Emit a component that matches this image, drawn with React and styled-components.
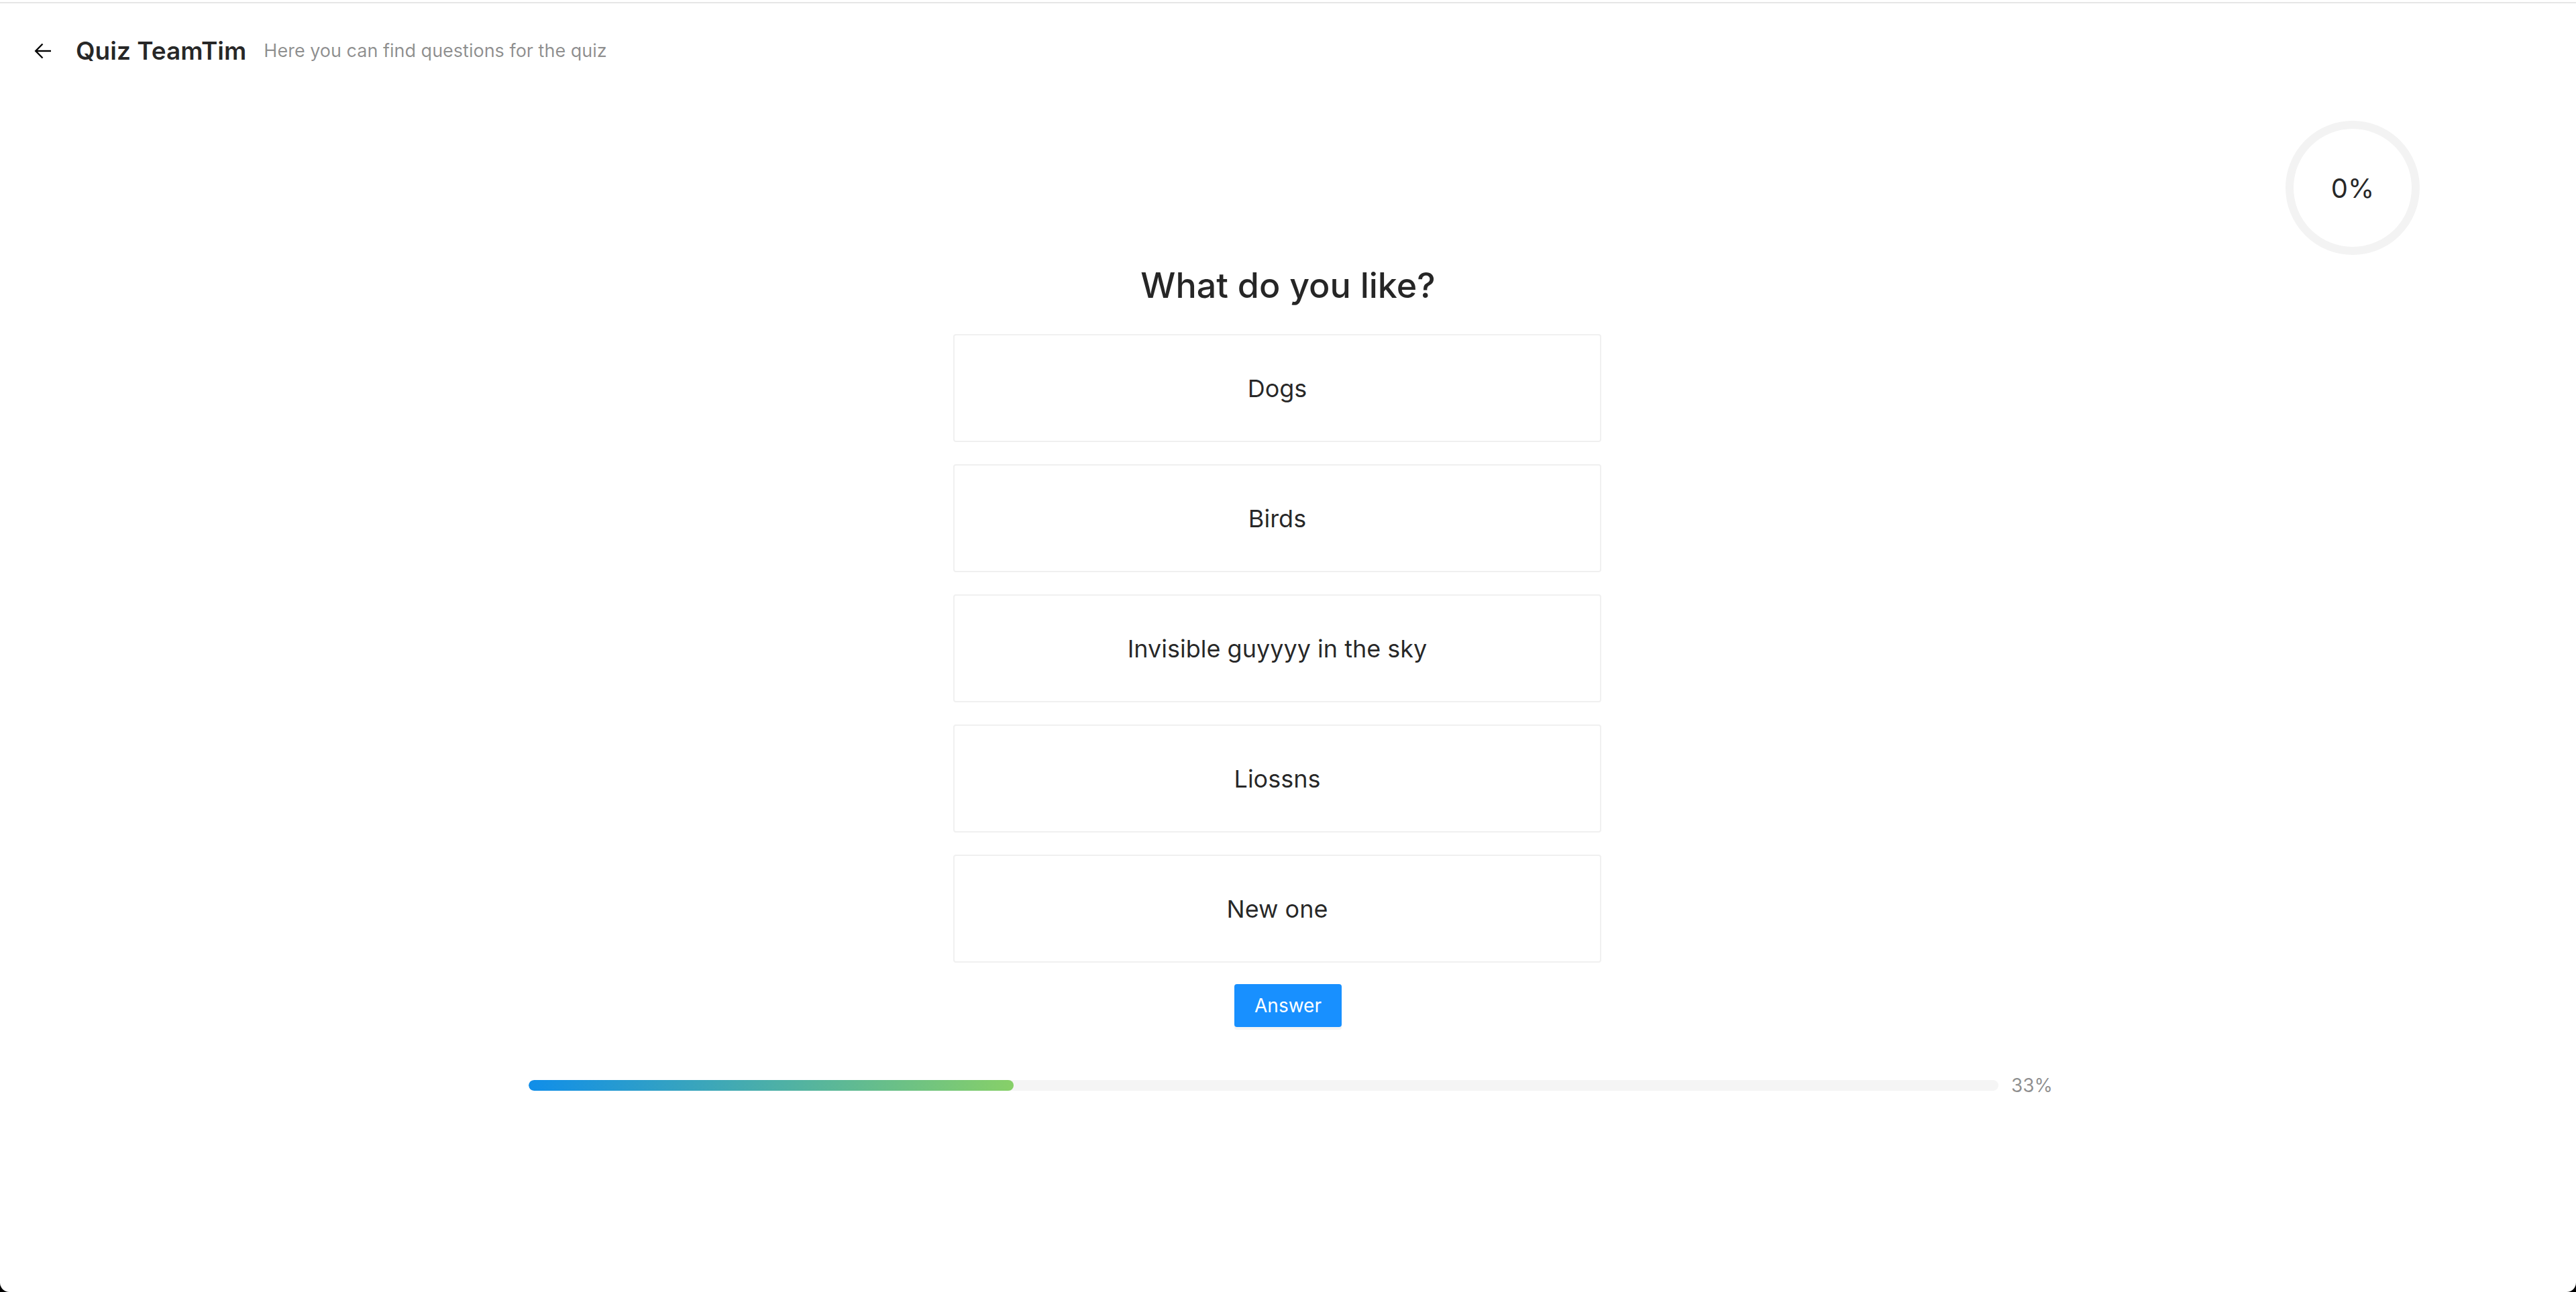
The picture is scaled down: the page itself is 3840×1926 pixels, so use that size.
import React from "react";
import styled, { createGlobalStyle } from "styled-components";

const GlobalStyle = createGlobalStyle`
  html, body {
    margin: 0;
    padding: 0;
    background: #000;
  }
  body {
    font-family: Inter, "Noto Sans", "Liberation Sans", sans-serif;
    color: rgba(0, 0, 0, 0.85);
    -webkit-font-smoothing: antialiased;
  }
  * { box-sizing: border-box; }
`;

const Page = styled.div`
  min-height: 100vh;
  background: #fff;
  border-radius: 0 0 14px 14px;
  display: flex;
  flex-direction: column;
  overflow: hidden;
`;

const TopRule = styled.div`
  height: 2px;
  margin-top: 3px;
  background: #e6e6e6;
`;

const Header = styled.header`
  display: flex;
  align-items: center;
  height: 64px;
  margin-top: 39px;
  padding-left: 51px;
`;

const BackButton = styled.button`
  display: flex;
  align-items: center;
  justify-content: center;
  width: 26px;
  height: 26px;
  padding: 0;
  margin-right: 36px;
  border: none;
  background: transparent;
  color: #000;
  cursor: pointer;
`;

const Title = styled.h1`
  margin: 0 26px 0 0;
  font-size: 37px;
  font-weight: 600;
  line-height: 64px;
  color: rgba(0, 0, 0, 0.85);
`;

const SubTitle = styled.span`
  font-size: 27px;
  line-height: 64px;
  color: rgba(0, 0, 0, 0.45);
`;

const StatsRow = styled.div`
  display: flex;
  justify-content: flex-end;
  padding-right: 233px;
  margin-top: 72px;
`;

const CircleWrap = styled.div`
  position: relative;
  width: 200px;
  height: 200px;
`;

const CircleText = styled.span`
  position: absolute;
  inset: 0;
  display: flex;
  align-items: center;
  justify-content: center;
  font-size: 40px;
  font-weight: 400;
  color: rgba(0, 0, 0, 0.85);
`;

const Main = styled.main`
  display: flex;
  flex-direction: column;
  align-items: center;
`;

const Question = styled.h2`
  margin: 10px 0 0;
  font-size: 52px;
  font-weight: 500;
  line-height: 72px;
  text-align: center;
  color: rgba(0, 0, 0, 0.85);
`;

const OptionList = styled.div`
  display: flex;
  flex-direction: column;
  gap: 33px;
  width: 966px;
  margin: 36px 32px 0 0;
`;

const Option = styled.div`
  display: flex;
  align-items: center;
  justify-content: center;
  height: 161px;
  border: 2px solid #f0f0f0;
  border-radius: 4px;
  background: #fff;
  font-size: 36px;
  color: rgba(0, 0, 0, 0.85);
  cursor: pointer;
`;

const AnswerButton = styled.button`
  margin-top: 32px;
  width: 160px;
  height: 64px;
  border: none;
  border-radius: 4px;
  background: #1890ff;
  color: #fff;
  font-family: inherit;
  font-size: 28px;
  box-shadow: 0 4px 0 rgba(0, 0, 0, 0.045);
  cursor: pointer;
`;

const ProgressRow = styled.div`
  display: flex;
  align-items: center;
  width: 2264px;
  height: 44px;
  margin-top: 65px;
`;

const Track = styled.div`
  flex: 1;
  height: 16px;
  border-radius: 100px;
  background: #f5f5f5;
  overflow: hidden;
`;

const Fill = styled.div`
  height: 100%;
  border-radius: 100px;
  background-image: linear-gradient(to right, #108ee9, #87d068);
`;

const ProgressLabel = styled.span`
  flex: none;
  width: 54px;
  margin-left: 19px;
  white-space: nowrap;
  font-size: 28px;
  color: rgba(0, 0, 0, 0.45);
`;

const ArrowLeft = () => (
  <svg width="26" height="26" viewBox="0 0 26 26" fill="none" stroke="currentColor" strokeWidth="2.4" strokeLinecap="butt" strokeLinejoin="miter">
    <path d="M25 13H2.5" />
    <path d="M12.5 2.5L2.2 13l10.3 10.5" />
  </svg>
);

const CircleProgress = ({ percent }) => {
  const size = 200;
  const stroke = 12;
  const r = (size - stroke) / 2;
  const c = 2 * Math.PI * r;
  return (
    <CircleWrap>
      <svg width={size} height={size} viewBox={`0 0 ${size} ${size}`}>
        <circle cx={size / 2} cy={size / 2} r={r} fill="none" stroke="#f3f3f3" strokeWidth={stroke} />
        {percent > 0 && (
          <circle
            cx={size / 2}
            cy={size / 2}
            r={r}
            fill="none"
            stroke="#1890ff"
            strokeWidth={stroke}
            strokeLinecap="round"
            strokeDasharray={`${(c * percent) / 100} ${c}`}
            transform={`rotate(-90 ${size / 2} ${size / 2})`}
          />
        )}
      </svg>
      <CircleText>{percent}%</CircleText>
    </CircleWrap>
  );
};

const options = ["Dogs", "Birds", "Invisible guyyyy in the sky", "Liossns", "New one"];

export default function App() {
  const progress = 33;
  return (
    <>
      <GlobalStyle />
      <Page>
        <TopRule />
        <Header>
          <BackButton aria-label="back">
            <ArrowLeft />
          </BackButton>
          <Title>Quiz TeamTim</Title>
          <SubTitle>Here you can find questions for the quiz</SubTitle>
        </Header>
        <StatsRow>
          <CircleProgress percent={0} />
        </StatsRow>
        <Main>
          <Question>What do you like?</Question>
          <OptionList>
            {options.map((o) => (
              <Option key={o}>{o}</Option>
            ))}
          </OptionList>
          <AnswerButton>Answer</AnswerButton>
          <ProgressRow>
            <Track>
              <Fill style={{ width: `${progress}%` }} />
            </Track>
            <ProgressLabel>{progress}%</ProgressLabel>
          </ProgressRow>
        </Main>
      </Page>
    </>
  );
}
